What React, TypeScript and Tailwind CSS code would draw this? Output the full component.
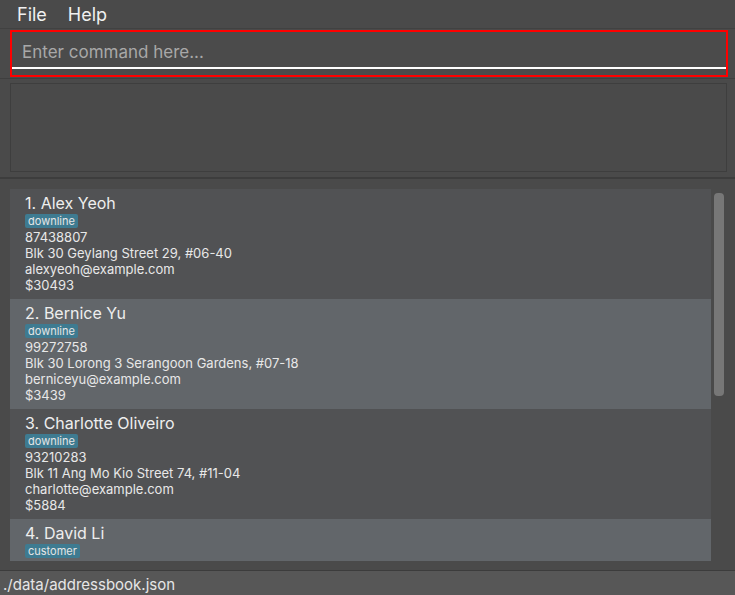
import React from "react";

type Person = {
  name: string;
  tag: string;
  phone: string;
  address: string;
  email: string;
  amount: string;
};

const people: Person[] = [
  { name: "Alex Yeoh", tag: "downline", phone: "87438807", address: "Blk 30 Geylang Street 29, #06-40", email: "alexyeoh@example.com", amount: "$30493" },
  { name: "Bernice Yu", tag: "downline", phone: "99272758", address: "Blk 30 Lorong 3 Serangoon Gardens, #07-18", email: "berniceyu@example.com", amount: "$3439" },
  { name: "Charlotte Oliveiro", tag: "downline", phone: "93210283", address: "Blk 11 Ang Mo Kio Street 74, #11-04", email: "charlotte@example.com", amount: "$5884" },
  { name: "David Li", tag: "customer", phone: "91031282", address: "Blk 436 Serangoon Gardens Street 26, #16-43", email: "lidavid@example.com", amount: "$1200" },
];

function PersonCard({ p, i }: { p: Person; i: number }) {
  return (
    <div className={`h-[110px] shrink-0 overflow-hidden pl-[15px] pt-[3px] ${i % 2 === 0 ? "bg-[#515254]" : "bg-[#62666a]"}`}>
      <div className="text-[16px] leading-[22px] text-[#eeeeee]">
        {i + 1}. {p.name}
      </div>
      <div className="flex">
        <span className="rounded-[2px] bg-[#3e7b91] px-[3px] text-[11px] leading-[14px] text-[#e6e6e6]">{p.tag}</span>
      </div>
      <div className="mt-[1px] text-[13px] leading-[16px] text-[#e8e8e8]">
        <div>{p.phone}</div>
        <div>{p.address}</div>
        <div>{p.email}</div>
        <div>{p.amount}</div>
      </div>
    </div>
  );
}

export default function App() {
  return (
    <div className="flex h-[595px] w-[735px] flex-col overflow-hidden bg-[#4a4a4a] font-['Inter',sans-serif] text-white">
      {/* menu */}
      <div className="flex h-[29px] shrink-0 items-center gap-[21px] border-b border-[#414141] pl-[17px] text-[18px] text-[#f0f0f0]">
        <span>File</span>
        <span>Help</span>
      </div>

      {/* command box */}
      <div className="shrink-0 border-b border-[#3f3f3f] px-[10px] pt-[1px] pb-[1px]">
        <div className="flex h-[47px] w-[718px] flex-col border-2 border-[#ff0000] bg-[#4b4b4b]">
          <div className="flex flex-1 items-center pl-[10px] pt-[6px] text-[17px] text-[#a8a8a8]">Enter command here...</div>
          <div className="mb-[6px] h-[2px] w-[714px] bg-white" />
        </div>
      </div>

      {/* result display */}
      <div className="shrink-0 border-b-2 border-[#3d3d3d] px-[10px] pt-[4px] pb-[5px]">
        <div className="h-[89px] w-[717px] border border-[#3e3e3e] bg-[#4a4a4a]" />
      </div>

      {/* list */}
      <div className="flex min-h-0 flex-1 overflow-hidden py-[10px] pl-[10px]">
        <div className="flex h-[372px] w-[701px] flex-col overflow-hidden">
          {people.map((p, i) => (
            <PersonCard key={p.name} p={p} i={i} />
          ))}
        </div>
        <div className="ml-[3px] pt-[4px]">
          <div className="h-[203px] w-[10px] rounded-[4px] bg-[#777777]" />
        </div>
      </div>

      {/* status */}
      <div className="flex h-[25px] shrink-0 items-center border-t border-[#3c3c3c] bg-[#575757] pl-[3px] pt-[3px] text-[15px] leading-[18px] text-[#e6e6e6]">
        ./data/addressbook.json
      </div>
    </div>
  );
}
